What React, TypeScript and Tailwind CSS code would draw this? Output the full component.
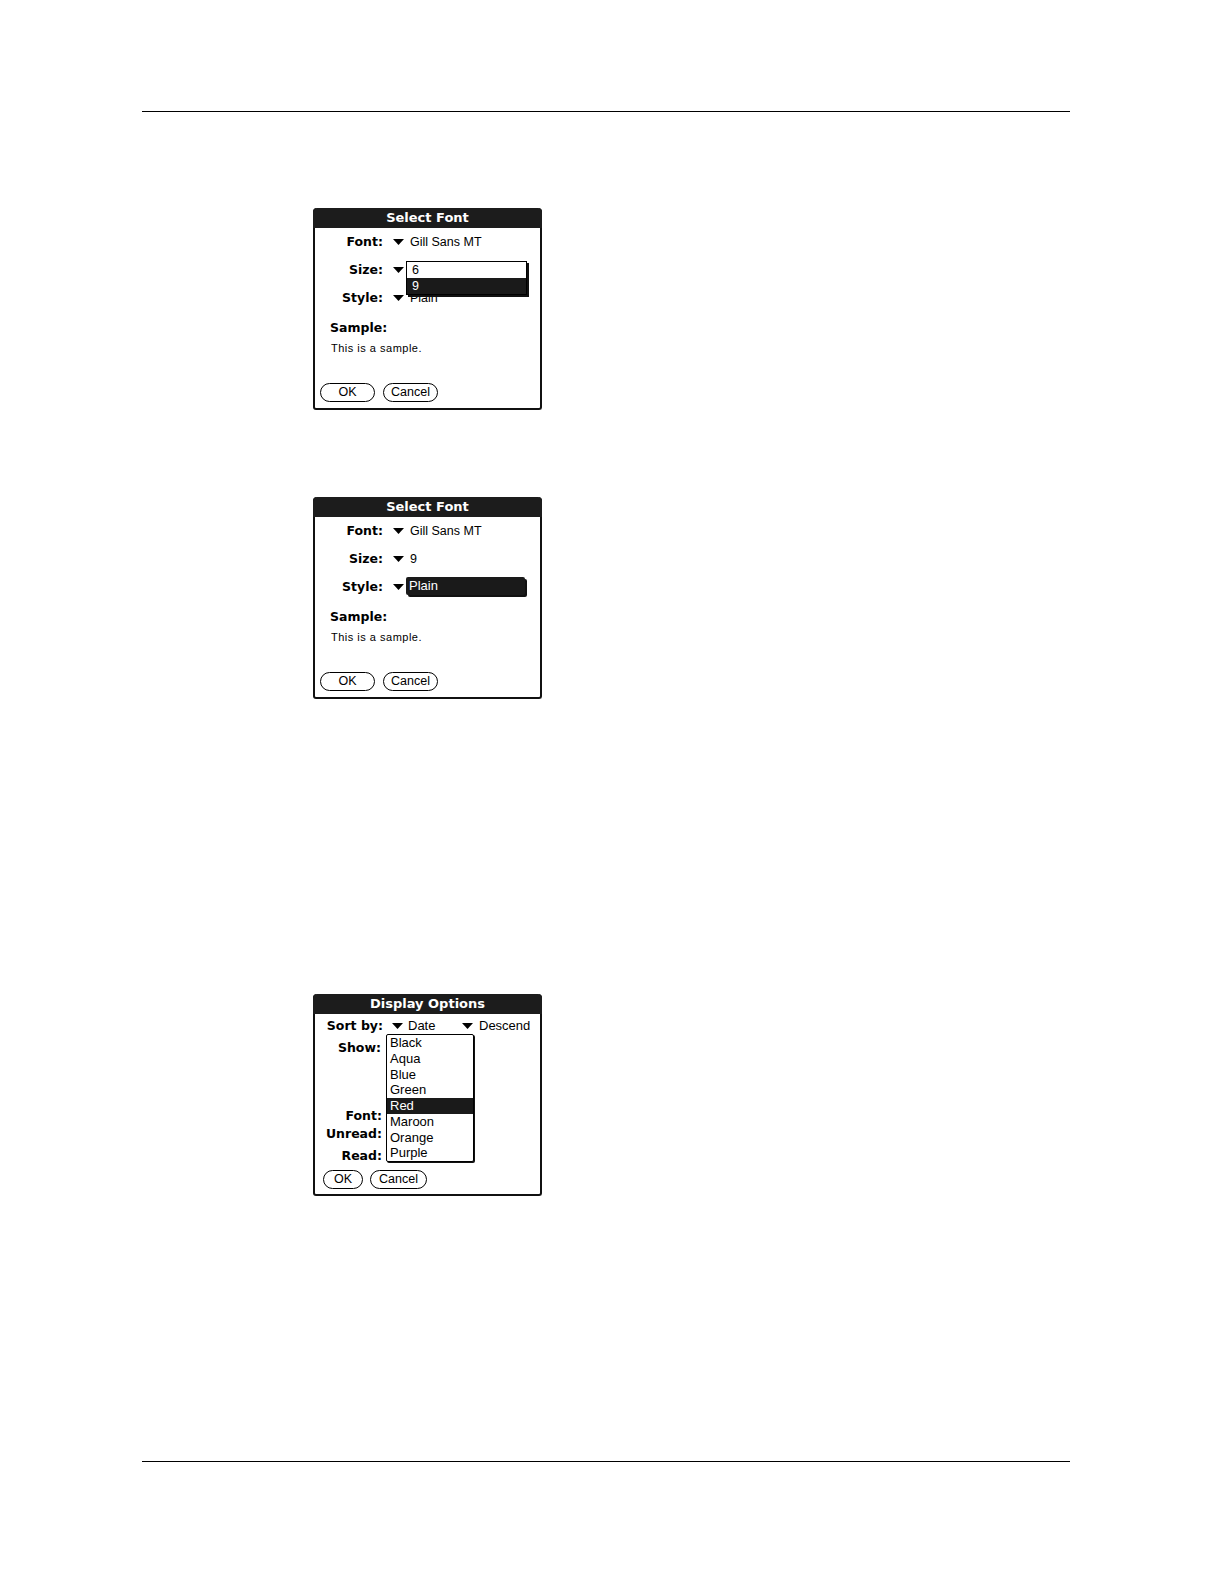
import React from 'react'

const bold = { fontFamily: '"DejaVu Sans", "Liberation Sans", sans-serif' }
const reg = { fontFamily: '"Liberation Sans", Arial, sans-serif' }

function Arrow() {
  return (
    <svg width="11" height="6" viewBox="0 0 11 6" className="shrink-0">
      <polygon points="0,0 11,0 5.5,6" fill="#000" />
    </svg>
  )
}

function Dialog({ title, children }: { title: string; children: React.ReactNode }) {
  return (
    <div className="relative flex h-[202px] w-[229px] flex-col rounded-t-[4px] rounded-b-[3px] border-2 border-t-0 border-[#111] bg-white">
      <div
        className="-mx-[2px] flex h-[20px] items-center justify-center rounded-t-[4px] bg-[#1c1c1c] text-[13px] font-bold text-white"
        style={bold}
      >
        {title}
      </div>
      {children}
    </div>
  )
}

function Label({ children, w = 'w-[68px]' }: { children: React.ReactNode; w?: string }) {
  return (
    <div className={`${w} shrink-0 text-right text-[12.5px] font-bold leading-[20px] text-black`} style={bold}>
      {children}
    </div>
  )
}

function Field({ label, value, className = '' }: { label: string; value?: string; className?: string }) {
  return (
    <div className={`flex h-[20px] items-center ${className}`}>
      <Label>{label}</Label>
      <div className="ml-[10px]">
        <Arrow />
      </div>
      {value && (
        <span className="ml-[6px] text-[12.5px] leading-[20px] text-black" style={reg}>
          {value}
        </span>
      )}
    </div>
  )
}

function Button({ children, w }: { children: React.ReactNode; w: string }) {
  return (
    <div
      className={`${w} flex h-[19px] items-center justify-center rounded-full border-[1.5px] border-black text-[12.5px] leading-none text-black`}
      style={reg}
    >
      {children}
    </div>
  )
}

function FontBody({ size }: { size?: string }) {
  return (
    <>
      <Field label="Font:" value="Gill Sans MT" className="mt-[4px]" />
      <Field label="Size:" value={size} className="mt-[8px]" />
      <Field label="Style:" value="Plain" className="mt-[8px]" />
      <div className="ml-[15px] mt-[10px] text-[12.5px] font-bold leading-[20px] text-black" style={bold}>
        Sample:
      </div>
      <div className="ml-[16px] text-[11px] leading-[20px] tracking-[0.5px] text-black" style={reg}>
        This is a sample.
      </div>
      <div className="ml-[5px] mt-[25px] flex gap-[8px]">
        <Button w="w-[55px]">OK</Button>
        <Button w="w-[55px]">Cancel</Button>
      </div>
    </>
  )
}

export default function App() {
  return (
    <div className="bg-white pb-[118px]">
      <div className="pt-[111px]">
        <div className="ml-[142px] h-[1px] w-[928px] bg-black" />
      </div>

      <div className="ml-[313px] mt-[96px] w-fit">
        <Dialog title="Select Font">
          <FontBody />
          <div className="absolute left-[91px] top-[53px] w-[121px] border border-black bg-white shadow-[2px_2px_0_#111]">
            <div className="h-[16px] pl-[5px] text-[12.5px] leading-[16px] text-black" style={reg}>6</div>
            <div className="h-[16px] bg-[#1a1a1a] pl-[5px] text-[12.5px] leading-[16px] text-white" style={reg}>9</div>
          </div>
        </Dialog>
      </div>

      <div className="ml-[313px] mt-[87px] w-fit">
        <Dialog title="Select Font">
          <FontBody size="9" />
          <div
            className="absolute left-[91px] top-[80px] h-[18px] w-[119px] rounded-[2px] bg-[#1a1a1a] pl-[3px] text-[13px] leading-[18px] text-white shadow-[2px_2px_0_#111]"
            style={reg}
          >
            Plain
          </div>
        </Dialog>
      </div>

      <div className="ml-[313px] mt-[295px] w-fit">
        <Dialog title="Display Options">
          <div className="mt-[2px] flex h-[20px] items-center">
            <Label>Sort by:</Label>
            <div className="ml-[9px]"><Arrow /></div>
            <span className="ml-[5px] w-[54px] text-[13px] text-black" style={reg}>Date</span>
            <Arrow />
            <span className="ml-[6px] text-[13px] text-black" style={reg}>Descend</span>
          </div>
          <div className="mt-[2px] flex h-[20px] items-center">
            <Label w="w-[66px]">Show:</Label>
          </div>
          <div className="mt-[49px] flex h-[18px] items-center">
            <Label w="w-[67px]">Font:</Label>
          </div>
          <div className="flex h-[18px] items-center">
            <Label w="w-[67px]">Unread:</Label>
          </div>
          <div className="mt-[3px] flex h-[20px] items-center">
            <Label w="w-[67px]">Read:</Label>
          </div>
          <div className="ml-[8px] mt-[4px] flex gap-[7px]">
            <Button w="w-[40px]">OK</Button>
            <Button w="w-[57px]">Cancel</Button>
          </div>
          <div className="absolute left-[71px] top-[40px] w-[88px] rounded-[2px] border border-black bg-white shadow-[1px_1px_0_#111]">
            {['Black', 'Aqua', 'Blue', 'Green', 'Red', 'Maroon', 'Orange', 'Purple'].map((c) => (
              <div
                key={c}
                className={`h-[15.75px] pl-[3px] text-[13px] leading-[16px] ${c === 'Red' ? 'bg-[#1a1a1a] text-white' : 'text-black'}`}
                style={reg}
              >
                {c}
              </div>
            ))}
          </div>
        </Dialog>
      </div>

      <div className="ml-[142px] mt-[265px] h-[1px] w-[928px] bg-black" />
    </div>
  )
}
